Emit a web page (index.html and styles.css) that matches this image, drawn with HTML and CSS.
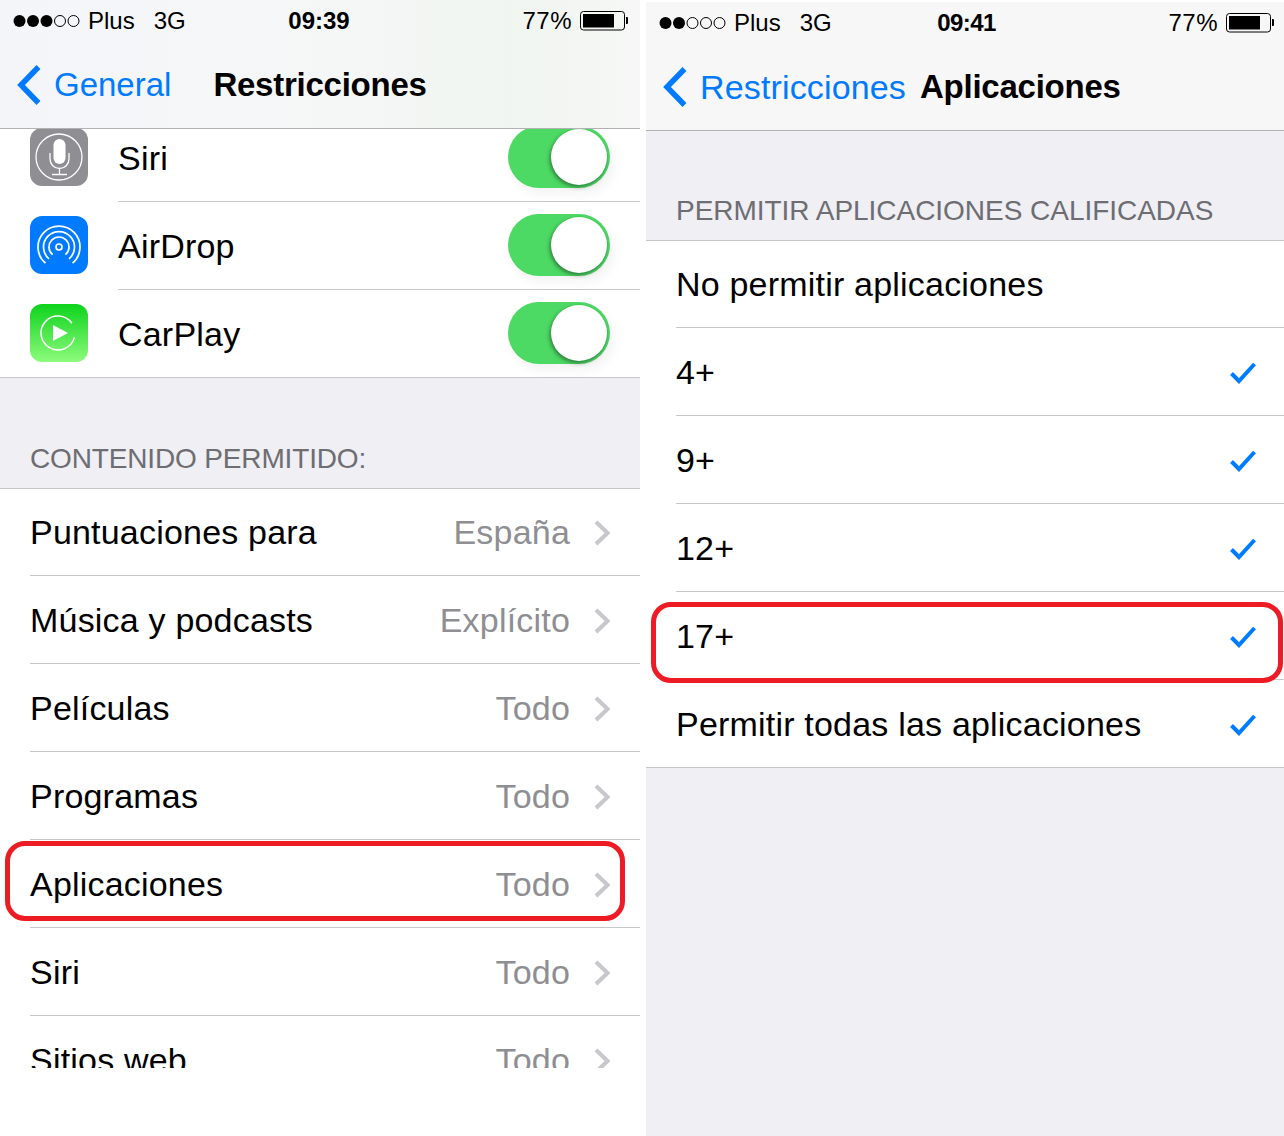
FILE: index.html
```html
<!DOCTYPE html>
<html lang="es">
<head>
    <meta charset="UTF-8">
    <title>Restricciones</title>
    <link rel="stylesheet" href="styles.css">
</head>
<body>

    <svg class="defs" width="0" height="0">
        <symbol id="chev" viewBox="0 0 16 26"><path d="M2 2l11.500 11L2 24" fill="none" stroke="#c7c7cc" stroke-width="4"/></symbol>
        <symbol id="check" viewBox="0 0 26 22"><path d="M1.500 11.500l7.500 7.500L24.500 2" fill="none" stroke="#007aff" stroke-width="4"/></symbol>
        <symbol id="back" viewBox="0 0 26 42"><path d="M22.500 3L5 21l17.500 18" fill="none" stroke="#007aff" stroke-width="5.500"/></symbol>
        <symbol id="batt" viewBox="0 0 48 20">
            <rect x="0.500" y="0.500" width="44" height="18.500" rx="3" fill="none" stroke="#000"/>
            <rect x="3" y="3" width="31" height="13.500" fill="#000"/>
            <path d="M46 6h1a1 1 0 0 1 1 1v5a1 1 0 0 1-1 1h-1z" fill="#000"/>
        </symbol>
    </svg>

    <div class="screen screen-left">
        <div class="topbar">
            <div class="status">
                <div class="status-left">
                    <svg class="dots" width="68" height="14" viewBox="0 0 68 14">
                        <circle cx="6.500" cy="7" r="6"/><circle cx="20" cy="7" r="6"/><circle cx="33.500" cy="7" r="6"/>
                        <circle class="off" cx="47" cy="7" r="5.500"/><circle class="off" cx="60.500" cy="7" r="5.500"/>
                    </svg>
                    <span class="carrier">Plus</span>
                    <span class="net">3G</span>
                </div>
                <div class="time">09:39</div>
                <div class="status-right">
                    <span class="pct">77%</span>
                    <svg class="batt" width="48" height="20"><use href="#batt"/></svg>
                </div>
            </div>
            <div class="nav">
                <svg class="back-icon" width="26" height="42"><use href="#back"/></svg>
                <span class="back-text">General</span>
                <span class="nav-title nav-title-left">Restricciones</span>
            </div>
        </div>

        <div class="scroll">
            <div class="group group-first">
                <div class="row">
                    <svg class="app-icon" width="58" height="58" viewBox="0 0 58 58">
                        <rect width="58" height="58" rx="12" fill="#8e8e93"/>
                        <circle cx="29" cy="29" r="23" fill="none" stroke="#fff" stroke-width="1.300"/>
                        <rect x="23.500" y="11" width="12" height="25" rx="6" fill="#fff"/>
                        <path d="M20 25v6a9.500 9.500 0 0 0 19 0v-6M29.500 40.500v6M22 46.500h15" fill="none" stroke="#fff" stroke-width="1.300"/>
                    </svg>
                    <div class="row-body"><span class="label">Siri</span><div class="toggle"><div class="knob"></div></div></div>
                </div>
                <div class="row">
                    <svg class="app-icon" width="58" height="58" viewBox="0 0 58 58">
                        <rect width="58" height="58" rx="12" fill="#007aff"/>
                        <path d="M15.500 47.200A21 21 0 1 1 42.500 47.200M19 42.900A15.500 15.500 0 1 1 39 42.900M22.600 38.700A10 10 0 1 1 35.400 38.700" fill="none" stroke="#fff" stroke-width="1.700"/>
                        <circle cx="29" cy="31" r="3" fill="none" stroke="#fff" stroke-width="1.700"/>
                    </svg>
                    <div class="row-body"><span class="label">AirDrop</span><div class="toggle"><div class="knob"></div></div></div>
                </div>
                <div class="row">
                    <svg class="app-icon" width="58" height="58" viewBox="0 0 58 58">
                        <defs><linearGradient id="cp" x1="0" y1="0" x2="0" y2="1"><stop offset="0" stop-color="#0dd31c"/><stop offset="1" stop-color="#8dfb7c"/></linearGradient></defs>
                        <rect width="58" height="58" rx="12" fill="url(#cp)"/>
                        <path d="M41.900 19.200A17 17 0 1 0 44.400 33.400" fill="none" stroke="#fff" stroke-width="1.500"/>
                        <path d="M23 21l15 8-15 8z" fill="#fff"/>
                    </svg>
                    <div class="row-body"><span class="label">CarPlay</span><div class="toggle"><div class="knob"></div></div></div>
                </div>
            </div>

            <div class="section section-left">CONTENIDO PERMITIDO:</div>

            <div class="group">
                <div class="row"><div class="row-body"><span class="label">Puntuaciones para</span><span class="value">España</span><svg class="chev" width="16" height="26"><use href="#chev"/></svg></div></div>
                <div class="row"><div class="row-body"><span class="label">Música y podcasts</span><span class="value">Explícito</span><svg class="chev" width="16" height="26"><use href="#chev"/></svg></div></div>
                <div class="row"><div class="row-body"><span class="label">Películas</span><span class="value">Todo</span><svg class="chev" width="16" height="26"><use href="#chev"/></svg></div></div>
                <div class="row"><div class="row-body"><span class="label">Programas</span><span class="value">Todo</span><svg class="chev" width="16" height="26"><use href="#chev"/></svg></div></div>
                <div class="row">
                    <div class="row-body"><span class="label">Aplicaciones</span><span class="value">Todo</span><svg class="chev" width="16" height="26"><use href="#chev"/></svg></div>
                    <div class="mark mark-left"></div>
                </div>
                <div class="row"><div class="row-body"><span class="label">Siri</span><span class="value">Todo</span><svg class="chev" width="16" height="26"><use href="#chev"/></svg></div></div>
                <div class="row"><div class="row-body"><span class="label">Sitios web</span><span class="value">Todo</span><svg class="chev" width="16" height="26"><use href="#chev"/></svg></div></div>
            </div>
        </div>
    </div>

    <div class="screen screen-right">
        <div class="topbar">
            <div class="status">
                <div class="status-left">
                    <svg class="dots" width="68" height="14" viewBox="0 0 68 14">
                        <circle cx="6.500" cy="7" r="6"/><circle cx="20" cy="7" r="6"/>
                        <circle class="off" cx="33.500" cy="7" r="5.500"/><circle class="off" cx="47" cy="7" r="5.500"/><circle class="off" cx="60.500" cy="7" r="5.500"/>
                    </svg>
                    <span class="carrier">Plus</span>
                    <span class="net">3G</span>
                </div>
                <div class="time">09:41</div>
                <div class="status-right">
                    <span class="pct">77%</span>
                    <svg class="batt" width="48" height="20"><use href="#batt"/></svg>
                </div>
            </div>
            <div class="nav">
                <svg class="back-icon" width="26" height="42"><use href="#back"/></svg>
                <span class="back-text">Restricciones</span>
                <span class="nav-title nav-title-right">Aplicaciones</span>
            </div>
        </div>

        <div class="section section-right">PERMITIR APLICACIONES CALIFICADAS</div>

        <div class="group">
            <div class="row"><div class="row-body"><span class="label">No permitir aplicaciones</span></div></div>
            <div class="row"><div class="row-body"><span class="label">4+</span><svg class="check" width="26" height="22"><use href="#check"/></svg></div></div>
            <div class="row"><div class="row-body"><span class="label">9+</span><svg class="check" width="26" height="22"><use href="#check"/></svg></div></div>
            <div class="row"><div class="row-body"><span class="label">12+</span><svg class="check" width="26" height="22"><use href="#check"/></svg></div></div>
            <div class="row">
                <div class="row-body"><span class="label">17+</span><svg class="check" width="26" height="22"><use href="#check"/></svg></div>
                <div class="mark mark-right"></div>
            </div>
            <div class="row"><div class="row-body"><span class="label">Permitir todas las aplicaciones</span><svg class="check" width="26" height="22"><use href="#check"/></svg></div></div>
        </div>
    </div>

</body>
</html>
```

FILE: styles.css
```css
body {
    margin: 0;
    width: 1284px;
    height: 1136px;
    overflow: hidden;
    background: #fff;
    display: flex;
    gap: 6px;
    font-family: "Liberation Sans", Arial, sans-serif;
    color: #000;
}
.defs {
    position: absolute;
}
.screen {
    overflow: hidden;
}
.screen-left {
    width: 640px;
    height: 1136px;
    background: #fff;
}
.screen-right {
    width: 638px;
    height: 1134px;
    margin-top: 2px;
    background: #efeff4;
}

/* top bar */
.topbar {
    height: 128px;
    border-bottom: 1px solid #b2b2b2;
    background: #f7f7f8;
}
.screen-left .topbar {
    background: linear-gradient(90deg, #f3f5f9 0%, #f5f7f7 50%, #f0f5f0 80%, #f6f7f6 100%);
}
.status {
    height: 42px;
    display: grid;
    grid-template-columns: 1fr auto 1fr;
    align-items: center;
    font-size: 24px;
    padding: 0 12px 0 13px;
}
.screen-right .status {
    padding-right: 10px;
}
.status-left, .status-right {
    display: flex;
    align-items: center;
}
.status-right {
    justify-content: flex-end;
}
.dots {
    fill: #000;
    margin-right: 7px;
}
.dots .off {
    fill: none;
    stroke: #000;
    stroke-width: 1;
}
.carrier {
    margin-right: 19px;
}
.time {
    font-weight: bold;
}
.screen-left .time {
    margin-left: -3px;
}
.screen-right .time {
    letter-spacing: -0.6px;
}
.pct {
    margin-right: 8px;
    letter-spacing: 0.5px;
}
.nav {
    height: 86px;
    display: flex;
    align-items: center;
    padding-left: 16px;
}
.back-icon {
    flex: none;
    margin-right: 12px;
}
.back-text {
    color: #007aff;
    font-size: 33px;
}
.screen-right .back-text {
    font-size: 34px;
    letter-spacing: 0.15px;
}
.nav-title {
    font-size: 33px;
    font-weight: bold;
    letter-spacing: -0.25px;
}
.nav-title-left {
    margin-left: 42px;
}
.nav-title-right {
    margin-left: 14px;
}

/* list */
.scroll {
    height: 939px;
    overflow: hidden;
}
.group {
    background: #fff;
    border-top: 1px solid #c8c7cc;
    border-bottom: 1px solid #c8c7cc;
}
.group-first {
    margin-top: -15px;
    border-top: none;
}
.section {
    background: #efeff4;
    color: #6d6d72;
    font-size: 28px;
    padding-left: 30px;
    box-sizing: border-box;
    display: flex;
    align-items: flex-end;
    padding-bottom: 13px;
}
.section-left {
    height: 110px;
    letter-spacing: -0.15px;
}
.section-right {
    height: 109px;
    letter-spacing: -0.03px;
}
.row {
    position: relative;
    display: flex;
    align-items: flex-start;
    padding-left: 30px;
}
.app-icon {
    flex: none;
    margin: 14px 30px 0 0;
}
.row-body {
    flex: 1;
    height: 87px;
    border-bottom: 1px solid #c8c7cc;
    display: flex;
    align-items: center;
    padding-right: 30px;
}
.group:not(.group-first) .row:first-child .row-body {
    height: 86px;
}
.row:last-child .row-body {
    border-bottom: none;
}
.label {
    font-size: 34px;
    letter-spacing: 0.2px;
    flex: 1;
    padding-top: 2px;
}
.value {
    font-size: 34px;
    letter-spacing: 0.2px;
    color: #8e8e93;
    margin-right: 24px;
    padding-top: 2px;
}
.group:not(.group-first) .row:first-child .label,
.group:not(.group-first) .row:first-child .value {
    padding-top: 0;
}
.chev {
    flex: none;
    margin-top: 2px;
}
.check {
    flex: none;
    margin: 2px -2px 0 0;
}
.toggle {
    position: relative;
    flex: none;
    width: 102px;
    height: 62px;
    margin-bottom: 2px;
    border-radius: 31px;
    background: #4cd964;
    box-shadow: 4px 6px 12px rgba(0, 0, 0, 0.05);
}
.knob {
    position: absolute;
    top: 3px;
    right: 3px;
    width: 56px;
    height: 56px;
    border-radius: 50%;
    background: #fff;
    box-shadow: -1px 2px 4px rgba(0, 0, 0, 0.45);
}

/* red marks over the rows */
.mark {
    position: absolute;
    box-sizing: border-box;
    border: 5px solid #ed1c24;
    border-radius: 20px;
}
.mark-left {
    top: 1px;
    left: 5px;
    width: 620px;
    height: 80px;
}
.mark-right {
    top: 10px;
    left: 5px;
    width: 632px;
    height: 81px;
}
```
